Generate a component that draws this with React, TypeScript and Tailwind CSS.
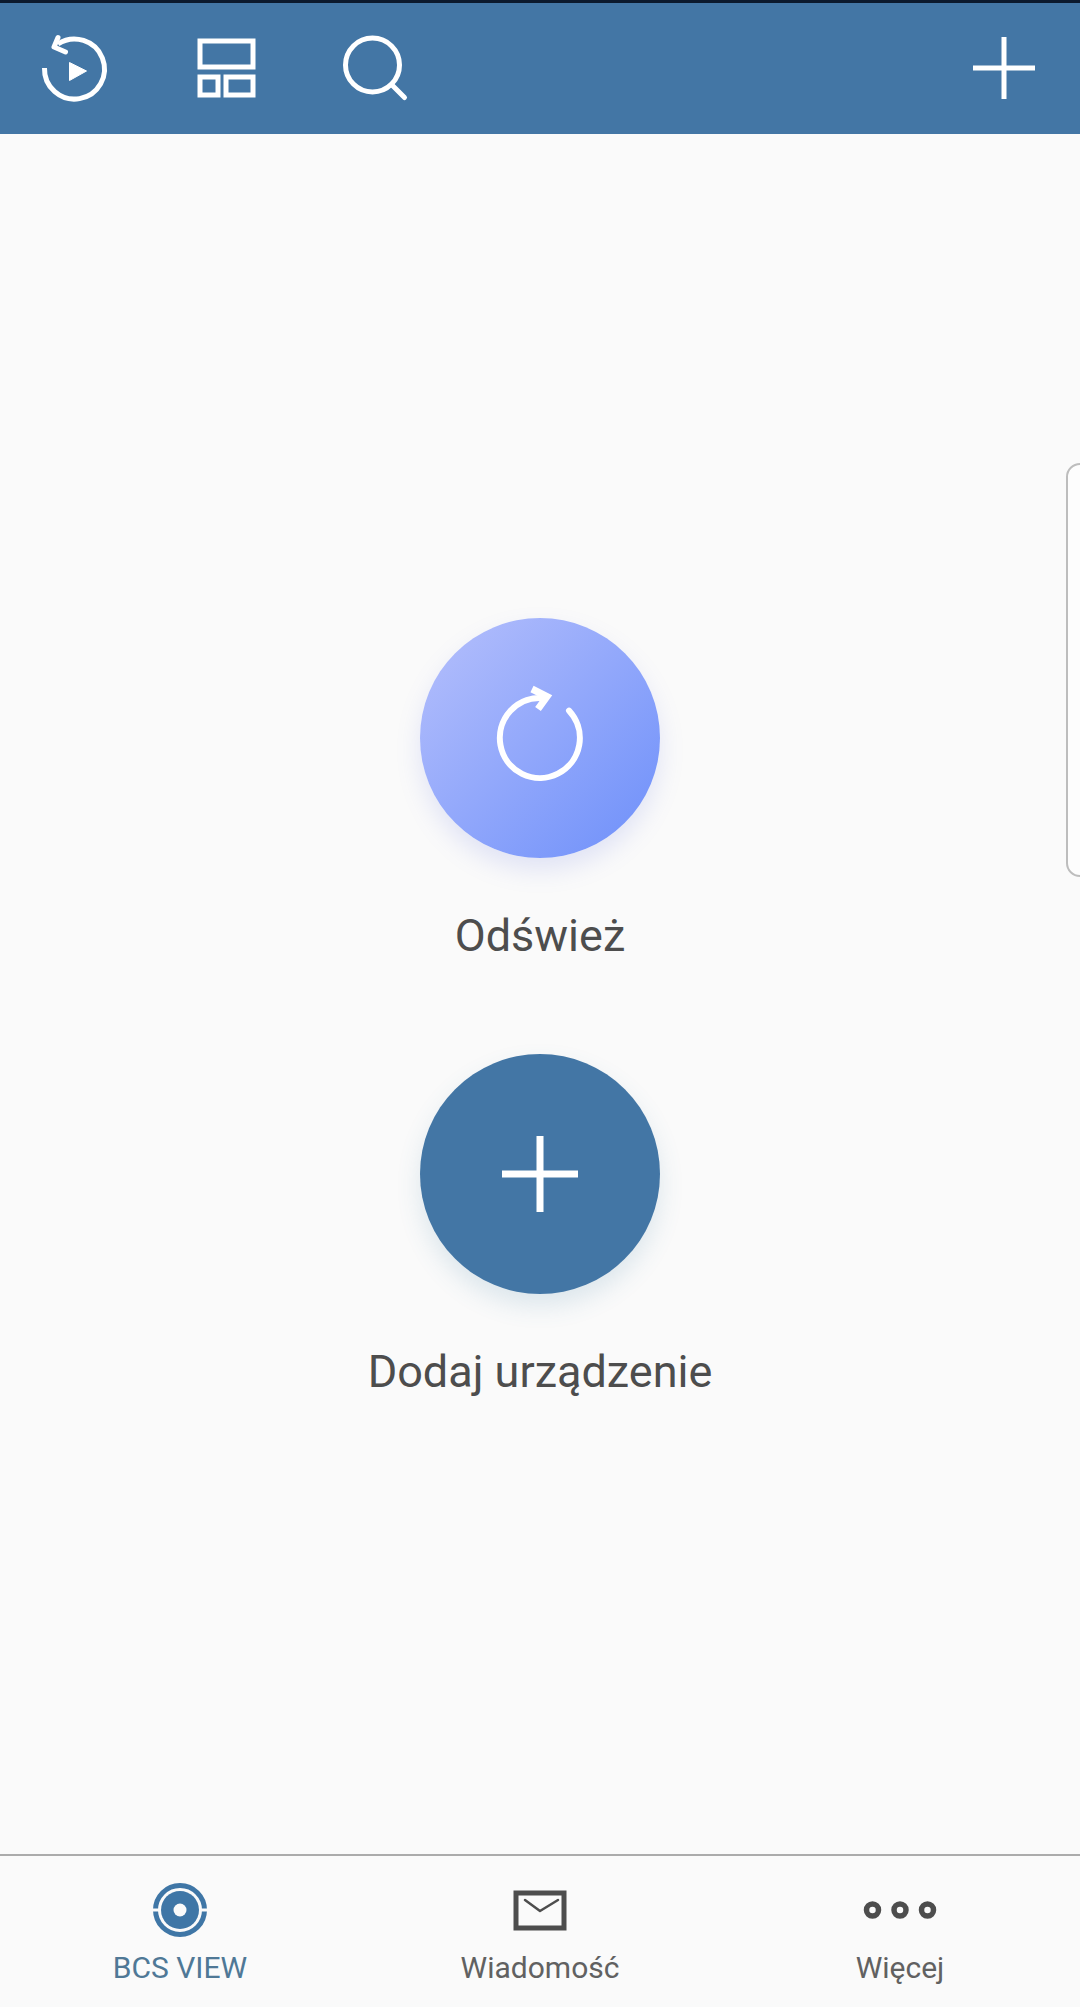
const white = "#ffffff";

function ReplayIcon() {
  // viewBox origin sits at x=35, y=29 of the page
  return (
    <svg width="80" height="80" viewBox="0 0 80 80" fill="none" stroke={white} strokeWidth="5" strokeLinejoin="round">
      <path d="M9.500 39A30 30 0 1 0 23 15" />
      <path d="M23 8.500L19 18l11.500 5" strokeLinecap="round" />
      <path d="M34.500 33.500v18l17-9.500z" fill={white} stroke={white} strokeWidth="1" />
    </svg>
  );
}

function LayoutIcon() {
  return (
    <svg width="72" height="80" viewBox="0 0 72 80" fill="none" stroke={white} strokeWidth="5">
      <rect x="10" y="12" width="53" height="26" />
      <rect x="10" y="48" width="18" height="18" />
      <rect x="36" y="48" width="27" height="18" />
    </svg>
  );
}

function SearchIcon() {
  return (
    <svg width="80" height="80" viewBox="0 0 80 80" fill="none" stroke={white} strokeWidth="5" strokeLinecap="round">
      <circle cx="37.500" cy="36" r="27" />
      <path d="M57 56l12.500 12.500" />
    </svg>
  );
}

function PlusIcon({ size, stroke }: { size: number; stroke: number }) {
  const mid = size / 2;
  return (
    <svg width={size} height={size} viewBox={`0 0 ${size} ${size}`} stroke={white} strokeWidth={stroke}>
      <path d={`M${mid} 0V${size}M0 ${mid}H${size}`} />
    </svg>
  );
}

function RefreshIcon() {
  return (
    <svg width="100" height="100" viewBox="0 0 100 100" fill="none" stroke={white} className="overflow-visible">
      <path d="M79 22.600A40 40 0 1 1 54 10.200" strokeWidth="6" strokeLinecap="round" />
      <path d="M42 1l15 7.500L48 21" strokeWidth="7" />
    </svg>
  );
}

function ViewIcon() {
  return (
    <svg width="60" height="60" viewBox="0 0 60 60" fill="none">
      <circle cx="30" cy="30" r="24.500" stroke="#3f76a6" strokeWidth="5" />
      <rect x="2" y="28.500" width="56" height="3" fill="#fafafa" />
      <circle cx="30" cy="30" r="19" fill="#3f76a6" />
      <circle cx="30" cy="30" r="6.500" fill="#fafafa" />
    </svg>
  );
}

function MailIcon() {
  return (
    <svg width="60" height="60" viewBox="0 0 60 60" fill="none" stroke="#4d4d4d">
      <rect x="6" y="13" width="48" height="35" strokeWidth="5" />
      <path d="M15 20l15 11 18-11" strokeWidth="2.500" strokeLinecap="round" strokeLinejoin="round" />
    </svg>
  );
}

function DotsIcon() {
  return (
    <svg width="90" height="60" viewBox="0 0 90 60" fill="none" stroke="#4d4d4d" strokeWidth="5.500">
      <circle cx="17.500" cy="30" r="6" />
      <circle cx="45" cy="30" r="6" />
      <circle cx="72.500" cy="30" r="6" />
    </svg>
  );
}

export default function App() {
  return (
    <div className="relative flex h-[2007px] w-[1080px] flex-col overflow-hidden bg-[#fafafa] font-['Roboto',sans-serif]">
      <header className="flex h-[134px] items-start border-t-[3px] border-[#0c1a2e] bg-[#4376a5] pt-[26px] pr-[35px] pl-[35px]">
        <ReplayIcon />
        <div className="ml-[75px]">
          <LayoutIcon />
        </div>
        <div className="ml-[73px]">
          <SearchIcon />
        </div>
        <div className="mt-[8px] mr-[10px] ml-auto">
          <PlusIcon size={62} stroke={5} />
        </div>
      </header>

      <main className="flex flex-1 flex-col items-center pt-[484px]">
        <button className="flex h-[240px] w-[240px] items-center justify-center rounded-full bg-[linear-gradient(135deg,#b6c0fc,#6d8ffa)] shadow-[0_12px_24px_rgba(110,125,225,0.18)]">
          <RefreshIcon />
        </button>
        <p className="mt-[54px] text-[45px] leading-[48px] text-[#4d4d4d]">Odśwież</p>

        <button className="mt-[94px] flex h-[240px] w-[240px] items-center justify-center rounded-full bg-[#4376a5] shadow-[0_12px_24px_rgba(70,130,165,0.16)]">
          <PlusIcon size={76} stroke={7} />
        </button>
        <p className="mt-[54px] text-[45px] leading-[48px] text-[#4d4d4d]">Dodaj urządzenie</p>
      </main>

      <nav className="grid h-[153px] grid-cols-3 border-t-2 border-[#ababab] pt-[24px]">
        <div className="flex flex-col items-center">
          <ViewIcon />
          <span className="mt-[11px] text-[30px] leading-[34px] text-[#4f7896]">BCS VIEW</span>
        </div>
        <div className="flex flex-col items-center">
          <MailIcon />
          <span className="mt-[11px] text-[30px] leading-[34px] text-[#616161]">Wiadomość</span>
        </div>
        <div className="flex flex-col items-center">
          <DotsIcon />
          <span className="mt-[11px] text-[30px] leading-[34px] text-[#616161]">Więcej</span>
        </div>
      </nav>

      {/* edge panel handle */}
      <div className="absolute top-[463px] right-[-14px] h-[414px] w-[28px] rounded-[16px] border-2 border-[#bdbdbd] bg-[#fdfdfd]" />
    </div>
  );
}
